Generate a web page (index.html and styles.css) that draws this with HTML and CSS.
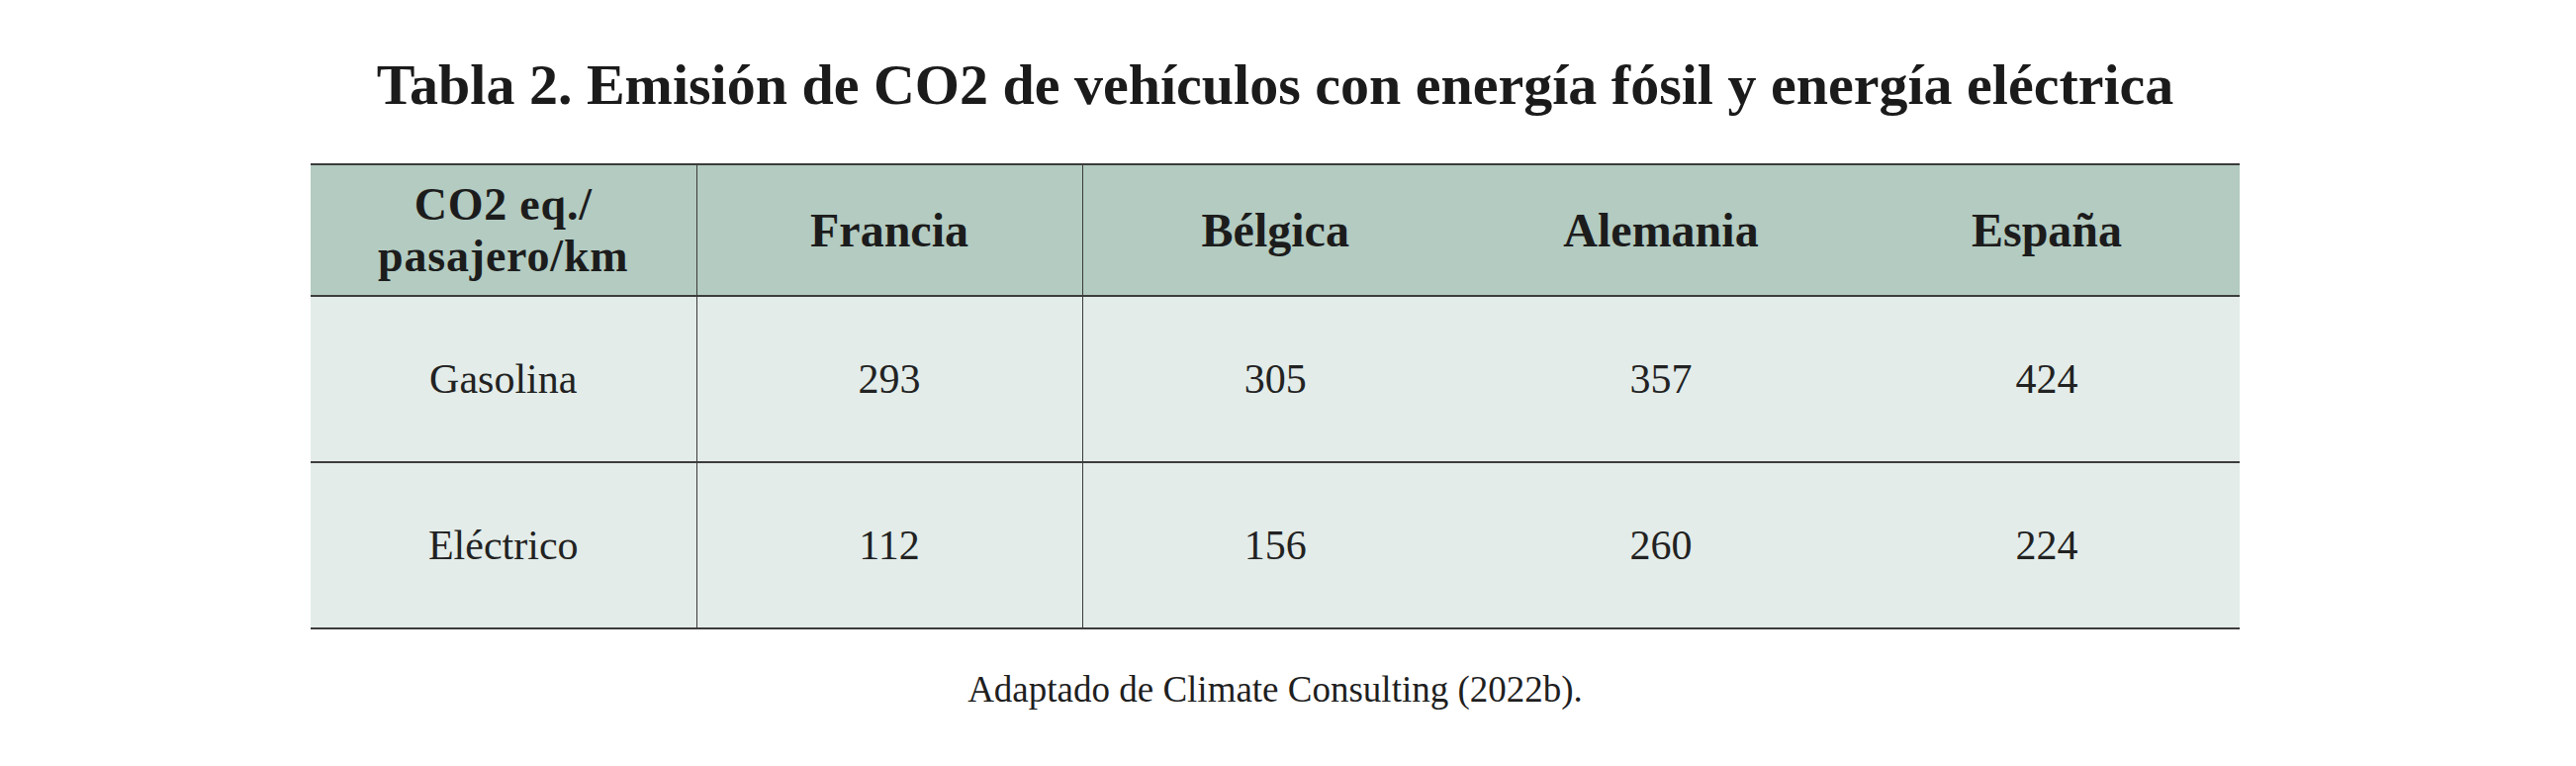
FILE: index.html
```html
<!DOCTYPE html>
<html lang="es">
<head>
<meta charset="utf-8">
<link rel="stylesheet" href="styles.css">
</head>
<body>
<main class="page">
  <h1 class="title">Tabla 2. Emisión de CO2 de vehículos con energía fósil y energía eléctrica</h1>
  <table class="data">
    <thead>
      <tr>
        <th class="sep"><span class="hline">CO2 eq./</span><span class="hline">pasajero/km</span></th>
        <th class="sep">Francia</th>
        <th>Bélgica</th>
        <th>Alemania</th>
        <th>España</th>
      </tr>
    </thead>
    <tbody>
      <tr>
        <td class="sep">Gasolina</td>
        <td class="sep">293</td>
        <td>305</td>
        <td>357</td>
        <td>424</td>
      </tr>
      <tr>
        <td class="sep">Eléctrico</td>
        <td class="sep">112</td>
        <td>156</td>
        <td>260</td>
        <td>224</td>
      </tr>
    </tbody>
  </table>
  <p class="caption">Adaptado de Climate Consulting (2022b).</p>
</main>
</body>
</html>
```
FILE: styles.css
```css
html, body {
  margin: 0;
  padding: 0;
  background: #ffffff;
}

.page {
  width: 1950px;
  padding: 0 0 0 314px;
  font-family: "Liberation Serif", "Times New Roman", serif;
  color: #1f1f1f;
}

.title {
  margin: 0;
  padding-top: 53px;
  font-size: 58px;
  line-height: 65px;
  font-weight: bold;
  text-align: center;
  color: #1b1b1b;
}

.data {
  margin-top: 47px;
  width: 1950px;
  table-layout: fixed;
  border-collapse: collapse;
}

.data th,
.data td {
  text-align: center;
  vertical-align: middle;
  padding: 0;
  border-top: 2px solid #3c3c3c;
  border-bottom: 2px solid #3c3c3c;
}

.data th {
  height: 131px;
  background: #b3cbc1;
  font-size: 48px;
  line-height: 54px;
  font-weight: bold;
  color: #1c1c1c;
}

.data th .hline {
  display: block;
  font-size: 46px;
  line-height: 52px;
  letter-spacing: 0.8px;
}

.data td {
  height: 166px;
  background: #e3ece9;
  font-size: 42px;
  font-weight: normal;
  color: #222222;
}

.data .sep {
  border-right: 1.5px solid #3a3a3a;
}

.caption {
  margin: 40px 0 0 0;
  font-size: 37px;
  line-height: 42px;
  text-align: center;
  color: #1f1f1f;
}
```
